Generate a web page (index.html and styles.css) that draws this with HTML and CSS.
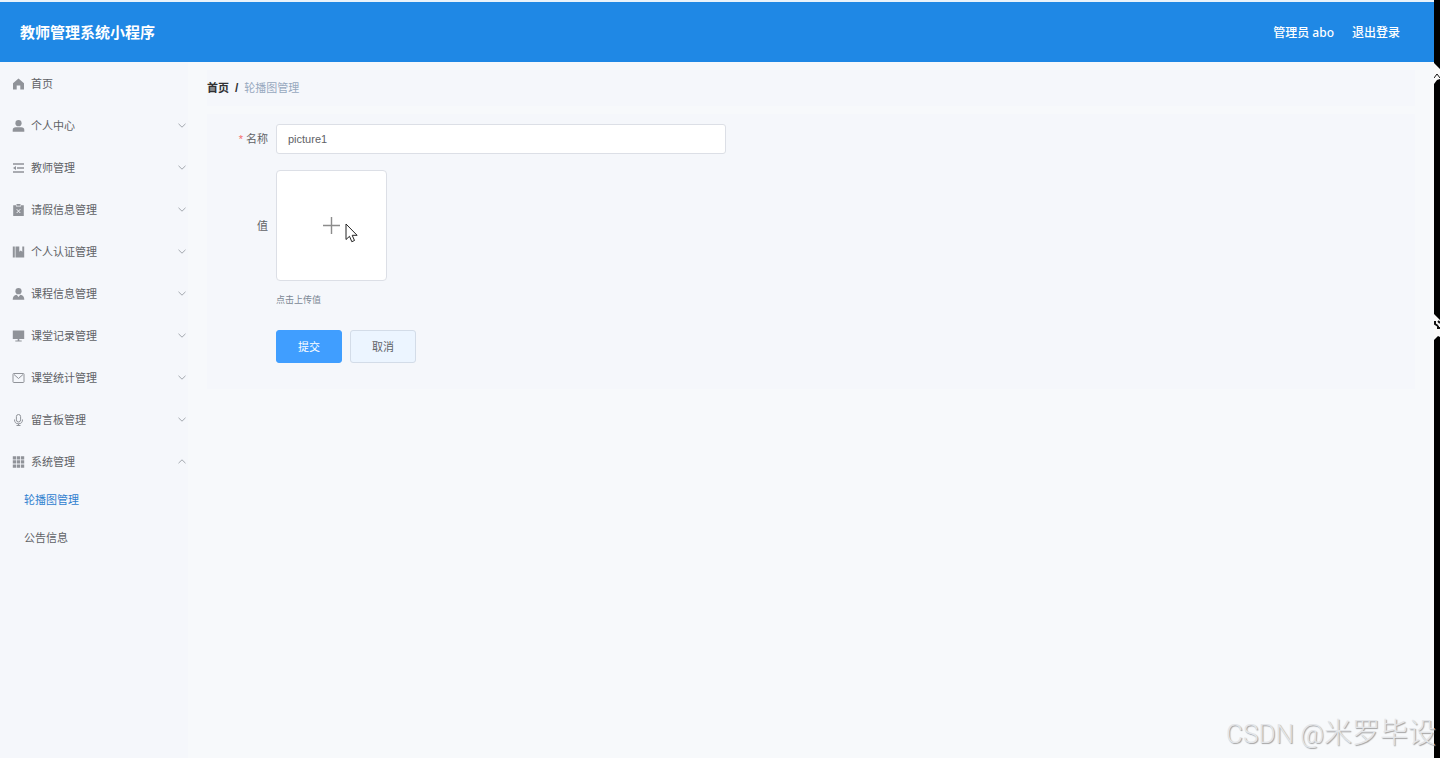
FILE: index.html
```html
<!DOCTYPE html>
<html lang="zh-CN">
<head>
<meta charset="utf-8">
<title>教师管理系统小程序</title>
<link rel="stylesheet" href="styles.css">
</head>
<body>
<div class="screen">
<div class="app">
  <header class="header">
    <h1 class="brand">教师管理系统小程序</h1>
    <div class="account"><span>管理员 abo</span><a href="#logout">退出登录</a></div>
  </header>
  <div class="body">
    <nav class="sidebar">
      <a class="item" href="#home"><svg class="icon" viewBox="0 0 12 12"><path d="M6 .5 11.5 5.3V11.5H7.8V7.5H4.2v4H.5V5.3z"/></svg><span>首页</span></a>
      <button class="item" type="button"><svg class="icon" viewBox="0 0 12 12"><circle cx="6" cy="3.2" r="3.1"/><path d="M.2 11.7V10Q.2 7.2 3.300 7.200h5.400q3.100 0 3.100 2.800v1.700z"/></svg><span>个人中心</span><svg class="arrow" viewBox="0 0 8 5"><path d="M.5.8 4 4.2 7.500.8"/></svg></button>
      <button class="item" type="button"><svg class="icon" viewBox="0 0 12 12"><path d="M.5 1.200h11v1.600H.5zM4.500 5.200h7v1.600h-7zM.5 9.200h11v1.600H.5zM.5 6 3.500 4v4z"/></svg><span>教师管理</span><svg class="arrow" viewBox="0 0 8 5"><path d="M.5.8 4 4.2 7.500.8"/></svg></button>
      <button class="item" type="button"><svg class="icon" viewBox="0 0 12 12"><path d="M.7 1.200h2.800V2.500h5V1.200h2.800v10.700H.7zM4 .1h4v1.700H4z"/><path class="cut" d="m4.200 5.200 3.600 3.800m0-3.800L4.200 9"/></svg><span>请假信息管理</span><svg class="arrow" viewBox="0 0 8 5"><path d="M.5.8 4 4.2 7.500.8"/></svg></button>
      <button class="item" type="button"><svg class="icon" viewBox="0 0 12 12"><path d="M.3.5h2v11h-2zM3 .5h3.800v5.300L8.300 4.500l1.500 1.300V.5h1.900v11H3z"/></svg><span>个人认证管理</span><svg class="arrow" viewBox="0 0 8 5"><path d="M.5.8 4 4.2 7.500.8"/></svg></button>
      <button class="item" type="button"><svg class="icon" viewBox="0 0 12 12"><circle cx="6" cy="3.200" r="3.100"/><path d="M.2 11.700Q.2 7.400 4.200 6.800L6 9l1.800-2.200q4 .6 4 4.900z"/></svg><span>课程信息管理</span><svg class="arrow" viewBox="0 0 8 5"><path d="M.5.8 4 4.2 7.500.8"/></svg></button>
      <button class="item" type="button"><svg class="icon" viewBox="0 0 12 12"><path d="M.3.5h11.400v8.600H.3zM5.200 9h1.600v1.500H5.200zM2.800 10.400h6.400v1.100H2.800z"/></svg><span>课堂记录管理</span><svg class="arrow" viewBox="0 0 8 5"><path d="M.5.8 4 4.2 7.500.8"/></svg></button>
      <button class="item" type="button"><svg class="icon line" viewBox="0 0 12 12"><rect x=".5" y="1.500" width="11" height="9" rx=".7"/><path d="m1.500 2.500 4.500 4 4.500-4"/></svg><span>课堂统计管理</span><svg class="arrow" viewBox="0 0 8 5"><path d="M.5.8 4 4.2 7.500.8"/></svg></button>
      <button class="item" type="button"><svg class="icon line" viewBox="0 0 12 12"><rect x="3.900" y=".5" width="4.200" height="7.500" rx="2.100"/><path d="M2 5.500q0 4.300 4 4.300t4-4.300M6 9.800v1.700M4 11.500h4"/></svg><span>留言板管理</span><svg class="arrow" viewBox="0 0 8 5"><path d="M.5.8 4 4.2 7.500.8"/></svg></button>
      <button class="item" type="button" aria-expanded="true"><svg class="icon" viewBox="0 0 12 12"><path d="M.3.3h3.300v3.300H.3zM4.300.3h3.300v3.300H4.300zM8.400.3h3.300v3.300H8.400zM.3 4.300h3.300v3.300H.3zM4.300 4.300h3.300v3.300H4.300zM8.400 4.300h3.300v3.300H8.400zM.3 8.400h3.300v3.300H.3zM4.300 8.400h3.300v3.300H4.300zM8.400 8.400h3.300v3.300H8.400z"/></svg><span>系统管理</span><svg class="arrow" viewBox="0 0 8 5"><path d="M.5 4.200 4 .8l3.500 3.400"/></svg></button>
      <div class="submenu">
        <a class="subitem current" href="#carousel">轮播图管理</a>
        <a class="subitem" href="#notice">公告信息</a>
      </div>
    </nav>
    <main class="main">
      <div class="breadcrumb"><a href="#home">首页</a><b>/</b><span>轮播图管理</span></div>
      <form class="panel">
        <label class="label required" for="name">名称</label>
        <input class="input" id="name" type="text" value="picture1">
        <label class="label" for="upload">值</label>
        <button class="upload" id="upload" type="button" aria-label="点击上传值">
          <svg class="plus" viewBox="0 0 18 18"><path d="M9 0v18M0 9h18"/></svg>
          <svg class="pointer" viewBox="0 0 14 20"><path d="M1 1v15.500l3.500-3.200 2.300 5.400 2.700-1.200-2.300-5.200h4.900z"/></svg>
        </button>
        <p class="tip">点击上传值</p>
        <div class="actions">
          <button class="btn primary" type="submit">提交</button>
          <button class="btn" type="button">取消</button>
        </div>
      </form>
    </main>
  </div>
</div>
<div class="edge">
  <svg class="notch high" viewBox="0 0 6 22"><path class="paper" d="M0 1 6 7v10l-3 1-3 4z"/><path class="ink" d="m0 16 3-4 3 4"/></svg>
  <svg class="notch low" viewBox="0 0 6 28"><path class="paper" d="M0 1l6 6v17l-2-1-4 4z"/><path class="ink thick" d="M1 8v3l3 2m0-5 2 2M4 13v2h2"/></svg>
</div>
<div class="watermark"><span>CSDN @</span>米罗毕设</div>
</div>
</body>
</html>
```
FILE: styles.css
```css
* { box-sizing: border-box; }
body {
  margin: 0;
  font-family: "Liberation Sans", "Noto Sans CJK SC", sans-serif;
  font-size: 11px;
  line-height: 16px;
  color: #606266;
  background: #f7f9fb;
}
a { color: inherit; text-decoration: none; }
button, input { font: inherit; color: inherit; }
.screen { position: relative; display: flex; min-height: 100vh; overflow: hidden; }
.app { flex: 1; display: flex; flex-direction: column; border-top: 2px solid #e9f2fa; }
.header {
  display: flex;
  align-items: center;
  justify-content: space-between;
  height: 60px;
  padding: 2px 34px 0 20px;
  background: #1f88e5;
  color: #fff;
}
.brand { margin: 0; font-size: 15px; line-height: 20px; }
.account { display: flex; gap: 18px; font-family: "Noto Sans", "Noto Sans CJK SC", sans-serif; font-size: 12px; font-weight: 500; }
.body { flex: 1; display: flex; }
.sidebar { width: 188px; background: #f5f7fb; }
.item {
  display: flex;
  align-items: center;
  gap: 6px;
  width: 100%;
  height: 42px;
  padding: 2px 2px 0 12px;
  border: 0;
  background: none;
  text-align: left;
}
.icon { width: 13px; height: 12px; fill: #909399; }
.icon.line { fill: none; stroke: #909399; }
.cut { fill: none; stroke: #f5f7fb; }
.arrow { width: 8px; height: 5px; margin: 0 0 2px auto; fill: none; stroke: #a3a7ae; }
.subitem { display: flex; align-items: center; height: 38px; padding: 0 0 2px 24px; }
.current { color: #2f80cf; }
.main { flex: 1; padding: 8px 0 0 19px; }
.breadcrumb { display: flex; gap: 6px; align-items: center; height: 36px; margin-right: 19px; background: #f5f7fb; color: #303133; font-weight: bold; }
.breadcrumb b { font-size: 12px; }
.breadcrumb span { color: #97a8be; font-weight: normal; }
.panel {
  display: grid;
  grid-template-columns: 61px minmax(0, 450px);
  column-gap: 8px;
  margin: 8px 19px 0 0;
  padding: 10px 0 26px;
  background: #f5f7fb;
}
.label { align-self: center; text-align: right; }
.required::before { content: "*"; margin-right: 3px; color: #f56c6c; }
.input { height: 30px; padding: 0 11px; border: 1px solid #dcdfe6; border-radius: 3px; background: #fff; }
.upload {
  position: relative;
  display: flex;
  align-items: center;
  justify-content: center;
  width: 111px;
  height: 111px;
  padding: 0;
  border: 1px solid #dcdfe6;
  border-radius: 4px;
  background: #fff;
}
.label[for="upload"], .upload { margin-top: 16px; }
.plus { width: 17px; height: 17px; fill: none; stroke: #8c8c8c; stroke-width: 1.5; }
.pointer { position: absolute; left: 68px; top: 52px; width: 14px; height: 20px; fill: #fff; stroke: #222; }
.tip { grid-column: 2; margin: 11px 0 0; font-size: 9px; color: #7b8794; }
.actions { grid-column: 2; display: flex; gap: 8px; margin-top: 22px; }
.btn { width: 66px; height: 33px; padding: 0; border: 1px solid #d3dce8; border-radius: 3px; background: #ecf5ff; }
.primary { border-color: #409eff; background: #409eff; color: #fff; }
.edge { position: relative; width: 6px; background: #000; }
.notch { position: absolute; left: 0; width: 6px; }
.high { top: 62px; height: 22px; }
.low { top: 313px; height: 28px; }
.paper { fill: #fafafa; }
.ink { fill: none; stroke: #111; }
.thick { stroke-width: 2; }
.watermark {
  position: absolute;
  right: 4px;
  bottom: 4px;
  font-family: "Noto Sans CJK SC", sans-serif;
  font-size: 28px;
  font-weight: 300;
  line-height: 40px;
  color: #e3e5e8;
  text-shadow: 1px 1px 1px #a0a0a0;
}
.watermark span { font-family: Roboto, sans-serif; font-size: 26px; }
```
